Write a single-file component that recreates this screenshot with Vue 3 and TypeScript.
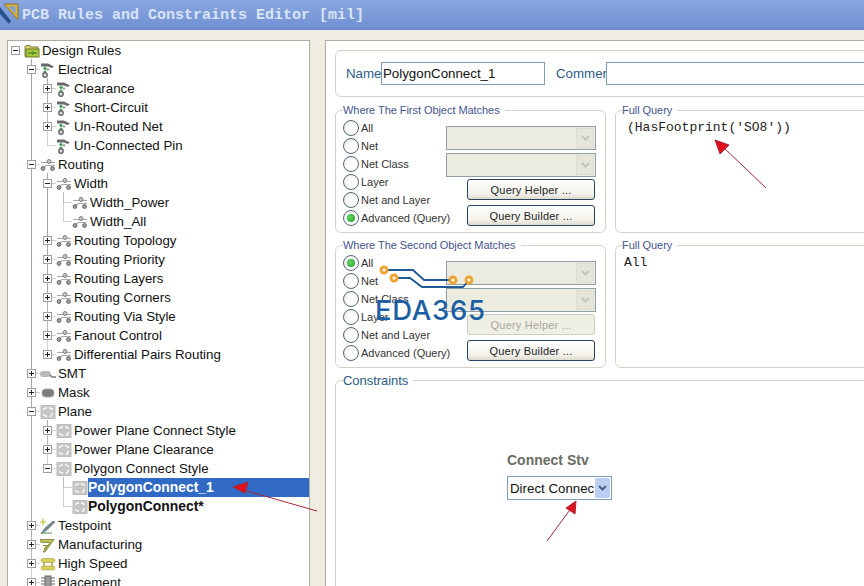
<script setup lang="ts">
type Icon = 'folder' | 'wire' | 'route' | 'smt' | 'mask' | 'plane' | 'test' | 'mfg' | 'speed' | 'place'
interface Row { label: string; level: number; icon: Icon; exp?: '+' | '-'; bold?: boolean; selected?: boolean }

const rows: Row[] = [
  { label: 'Design Rules', level: 0, icon: 'folder', exp: '-' },
  { label: 'Electrical', level: 1, icon: 'wire', exp: '-' },
  { label: 'Clearance', level: 2, icon: 'wire', exp: '+' },
  { label: 'Short-Circuit', level: 2, icon: 'wire', exp: '+' },
  { label: 'Un-Routed Net', level: 2, icon: 'wire', exp: '+' },
  { label: 'Un-Connected Pin', level: 2, icon: 'wire' },
  { label: 'Routing', level: 1, icon: 'route', exp: '-' },
  { label: 'Width', level: 2, icon: 'route', exp: '-' },
  { label: 'Width_Power', level: 3, icon: 'route' },
  { label: 'Width_All', level: 3, icon: 'route' },
  { label: 'Routing Topology', level: 2, icon: 'route', exp: '+' },
  { label: 'Routing Priority', level: 2, icon: 'route', exp: '+' },
  { label: 'Routing Layers', level: 2, icon: 'route', exp: '+' },
  { label: 'Routing Corners', level: 2, icon: 'route', exp: '+' },
  { label: 'Routing Via Style', level: 2, icon: 'route', exp: '+' },
  { label: 'Fanout Control', level: 2, icon: 'route', exp: '+' },
  { label: 'Differential Pairs Routing', level: 2, icon: 'route', exp: '+' },
  { label: 'SMT', level: 1, icon: 'smt', exp: '+' },
  { label: 'Mask', level: 1, icon: 'mask', exp: '+' },
  { label: 'Plane', level: 1, icon: 'plane', exp: '-' },
  { label: 'Power Plane Connect Style', level: 2, icon: 'plane', exp: '+' },
  { label: 'Power Plane Clearance', level: 2, icon: 'plane', exp: '+' },
  { label: 'Polygon Connect Style', level: 2, icon: 'plane', exp: '-' },
  { label: 'PolygonConnect_1', level: 3, icon: 'plane', bold: true, selected: true },
  { label: 'PolygonConnect*', level: 3, icon: 'plane', bold: true },
  { label: 'Testpoint', level: 1, icon: 'test', exp: '+' },
  { label: 'Manufacturing', level: 1, icon: 'mfg', exp: '+' },
  { label: 'High Speed', level: 1, icon: 'speed', exp: '+' },
  { label: 'Placement', level: 1, icon: 'place', exp: '+' },
]

const rowH = 19
const rowY = (i: number) => i * rowH + 9.5
const guides: string[] = []
rows.forEach((r, i) => {
  if (r.level === 0) return
  let p = i - 1
  while (rows[p].level !== r.level - 1) p--
  const x = 7.5 + 16 * r.level
  guides.push(`M${x} ${rowY(p)}V${rowY(i)}H${x + 9}`)
})
const guidePath = guides.join('')

const radios = ['All', 'Net', 'Net Class', 'Layer', 'Net and Layer', 'Advanced (Query)']
const groups = [
  { title: 'Where The First Object Matches', checked: 5, helperOff: false, query: "(HasFootprint('SO8'))" },
  { title: 'Where The Second Object Matches', checked: 0, helperOff: true, query: 'All' },
]
</script>

<template>
  <div class="window">
    <header class="titlebar">
      <svg class="title-icon" width="20" height="24" viewBox="0 0 20 24">
        <path d="M4 2H18V18Z" fill="#d8b23c" stroke="#8a7428" />
        <path d="M8.5 4.5H15.5V12Z" fill="#7f9fd8" />
        <path d="M0 5L11 19L9 22L0 12Z" fill="#27508f" />
      </svg>
      <span class="title-text">PCB Rules and Constraints Editor [mil]</span>
    </header>

    <main class="body">
      <aside class="tree">
        <svg class="guides" width="300" height="560"><path :d="guidePath" fill="none" stroke="#a4a4a4" stroke-dasharray="1 1" /></svg>
        <div v-for="r in rows" :key="r.label" class="row" :style="{ paddingLeft: 3 + 16 * r.level + 'px' }">
          <span class="exp" :class="{ blank: !r.exp, plus: r.exp === '+' }"></span>
          <svg class="icon" width="16" height="16" viewBox="0 0 16 16">
            <template v-if="r.icon === 'folder'">
              <path d="M1 4V3.5L2 2.5H6L7 4H14V13.5H1Z" fill="#d8cf74" stroke="#7f7a3a" />
              <rect x="2" y="6" width="13" height="8" fill="#a9c93c" stroke="#6c7a28" />
              <path d="M4 10H8M8 8.5L10 10L8 11.5M13 10H10" stroke="#2c6a20" fill="none" />
            </template>
            <template v-else-if="r.icon === 'wire'">
              <path d="M1 1.5H8L14 4.5L11.5 6L8 4.5H1Z" fill="#6a6a6a" />
              <path d="M5 4.5L7 6.5L5 8.5L3 6.5Z" fill="#3f9a55" />
              <path d="M8 6L9.5 7.5L8 9L6.5 7.5Z" fill="#8aa08a" />
              <path d="M5 8.5L7 10L5 11L3 10Z" fill="#3f9a55" />
              <circle cx="5" cy="13" r="2.2" fill="#ddd" stroke="#666" stroke-width="1.4" />
            </template>
            <template v-else-if="r.icon === 'route'">
              <path d="M1 5.5H15M1 10.5H4L6 8.5H15" fill="none" stroke="#a8a8a8" stroke-width="1.1" />
              <circle cx="9" cy="4.5" r="2" fill="#c4c4c4" stroke="#808080" />
              <circle cx="3" cy="11.5" r="1.9" fill="#a0a0a0" stroke="#666" />
              <circle cx="12.5" cy="11.5" r="1.9" fill="#a0a0a0" stroke="#666" />
            </template>
            <template v-else-if="r.icon === 'smt'">
              <rect x="0" y="5" width="11" height="6" rx="3" fill="#b9b9b9" />
              <path d="M10 9L12 11H16" fill="none" stroke="#777" stroke-width="1.5" />
            </template>
            <rect v-else-if="r.icon === 'mask'" x="2" y="4" width="12" height="8" rx="3.5" fill="#7c7c7c" stroke="#aaa" />
            <template v-else-if="r.icon === 'plane'">
              <rect x="1" y="1.5" width="14" height="13" fill="#c6c6c6" stroke="#bdbdbd" />
              <path d="M4 6V4H7M9 4H12V6M12 9V12H9M7 12H4V9" fill="none" stroke="#fff" stroke-width="1.4" stroke-dasharray="2 1" />
            </template>
            <template v-else-if="r.icon === 'test'">
              <path d="M1 16L5 10L13 3L15 4L7 12Z" fill="#7b8a90" stroke="#4a6a78" stroke-width=".6" />
              <path d="M1 15H12" stroke="#5b8b4a" />
              <path d="M3 1V7M0 4H6" stroke="#c4c030" stroke-width="1.2" />
            </template>
            <template v-else-if="r.icon === 'mfg'">
              <path d="M0 2.5H14L5 15H3L10 5.5H1Z" fill="#bfc35a" stroke="#7a7f38" stroke-width=".8" />
              <path d="M3 8.5H7.5L4 12.5" fill="none" stroke="#8b8f3e" stroke-width="1.2" />
            </template>
            <template v-else-if="r.icon === 'speed'">
              <rect x="1" y="2.5" width="14" height="4" rx="2" fill="#d8ce5c" stroke="#a5a040" stroke-width=".6" />
              <rect x="1" y="10" width="14" height="4" rx="2" fill="#d8ce5c" stroke="#a5a040" stroke-width=".6" />
              <path d="M4 6V10M12 6V10" stroke="#a5a040" stroke-width="1.4" />
            </template>
            <template v-else>
              <rect x="5" y="1" width="6" height="14" fill="#9a9a9a" stroke="#666" />
              <path d="M1 3H5M1 6H5M1 9H5M1 12H5M11 3H15M11 6H15M11 9H15M11 12H15" stroke="#666" />
            </template>
          </svg>
          <span class="label" :class="{ bold: r.bold, selected: r.selected }">{{ r.label }}</span>
        </div>
      </aside>

      <section class="editor">
        <div class="name-box">
          <label class="name-label name">Name</label>
          <input class="text-input name-input" value="PolygonConnect_1" readonly />
          <label class="name-label comment">Commer</label>
          <input class="text-input comment-input" readonly />
        </div>

        <div v-for="g in groups" :key="g.title" class="match-row">
          <fieldset class="group match">
            <legend>{{ g.title }}</legend>
            <div class="match-body">
              <div class="radios">
                <div v-for="(t, i) in radios" :key="t" class="radio-row">
                  <span class="radio" :class="{ on: i === g.checked }"></span>
                  <span>{{ t }}</span>
                </div>
              </div>
              <div class="controls">
                <div class="combo off"><span class="combo-btn"><svg width="11" height="8" viewBox="0 0 11 8"><path d="M2 2L5.5 5.5L9 2" fill="none" stroke="#c4c3b8" stroke-width="2" /></svg></span></div>
                <div class="combo off second"><span class="combo-btn"><svg width="11" height="8" viewBox="0 0 11 8"><path d="M2 2L5.5 5.5L9 2" fill="none" stroke="#c4c3b8" stroke-width="2" /></svg></span></div>
                <button class="btn first" :class="{ disabled: g.helperOff }">Query Helper ...</button>
                <button class="btn last">Query Builder ...</button>
              </div>
            </div>
          </fieldset>
          <fieldset class="group query">
            <legend>Full Query</legend>
            <div class="query-text" :class="{ all: g.query === 'All' }">{{ g.query }}</div>
          </fieldset>
        </div>

        <fieldset class="group constraints">
          <legend>Constraints</legend>
          <div class="connect">
            <div class="connect-title">Connect Stv</div>
            <div class="connect-combo">
              <span>Direct Connec</span>
              <span class="connect-btn"><svg width="11" height="8" viewBox="0 0 11 8"><path d="M2 2L5.5 5.5L9 2" fill="none" stroke="#4d6185" stroke-width="2" /></svg></span>
            </div>
          </div>
        </fieldset>
      </section>
    </main>

    <div class="watermark">
      <svg width="112" height="32" viewBox="0 0 112 32">
        <path d="M9 5H38L49 15H78M19 13H35L47 22H88L94 15" fill="none" stroke="#1d5a96" stroke-width="1.8" />
        <g fill="#fff" stroke="#efa436" stroke-width="3">
          <circle cx="9" cy="5" r="3" /><circle cx="19" cy="13" r="3" /><circle cx="78" cy="15" r="3" /><circle cx="94" cy="15" r="3" />
        </g>
      </svg>
      <span class="wm-text">EDA365</span>
    </div>

    <svg class="arrows" width="864" height="586">
      <g stroke="#a8283a" fill="#e0101c">
        <path d="M317 511L240 489" fill="none" />
        <path d="M233 487L248 482L245 493Z" />
        <path d="M766 188L722 146" fill="none" />
        <path d="M715 140L729 145L720 154Z" />
        <path d="M547 541L572 507" fill="none" />
        <path d="M576 501L575 514L566 508Z" />
      </g>
    </svg>
  </div>
</template>

<style scoped>
.window {
  position: relative;
  width: 864px;
  height: 586px;
  overflow: hidden;
  background: #efece1;
  font-family: "Liberation Sans", Arial, sans-serif;
  display: flex;
  flex-direction: column;
}
.titlebar {
  height: 30px;
  flex: none;
  display: flex;
  align-items: center;
  background: linear-gradient(#8aa6df, #7293d4 85%, #6c8ccb);
}
.title-icon { flex: none; margin: 0 2px 2px 0; }
.title-text {
  font-family: "Liberation Mono", monospace;
  font-size: 15px;
  font-weight: bold;
  color: #d9e4f6;
  white-space: nowrap;
}
.body {
  flex: 1;
  min-height: 0;
  display: flex;
  padding: 10px 0 0 7px;
  gap: 15px;
}
.tree {
  position: relative;
  width: 303px;
  flex: none;
  box-sizing: border-box;
  background: #fff;
  border: 1px solid #aeac9f;
  border-bottom: 0;
  overflow: hidden;
}
.guides { position: absolute; left: 0; top: 0; }
.row {
  position: relative;
  height: 19px;
  display: flex;
  align-items: center;
  font-size: 13.3px;
  color: #111;
  white-space: nowrap;
}
.exp {
  position: relative;
  width: 9px;
  height: 9px;
  flex: none;
  box-sizing: border-box;
  border: 1px solid #9aa0a0;
  background: #fff;
  margin-right: 4px;
}
.exp::before {
  content: "";
  position: absolute;
  left: 1px;
  top: 3px;
  width: 5px;
  height: 1px;
  background: #222;
}
.exp.plus::after {
  content: "";
  position: absolute;
  left: 3px;
  top: 1px;
  width: 1px;
  height: 5px;
  background: #222;
}
.exp.blank { visibility: hidden; }
.icon { flex: none; background: #fff; }
.label {
  flex: 1;
  height: 19px;
  line-height: 19px;
  padding-left: 2px;
}
.label.bold { font-weight: bold; font-size: 13.9px; padding-left: 0; }
.label.selected { background: #316ac5; color: #fff; }
.editor {
  flex: 1;
  min-width: 0;
  background: #fff;
  border: 1px solid #aeac9f;
  border-width: 1px 0 0 1px;
  padding: 9px 0 0 9px;
  overflow: hidden;
}
.name-box {
  box-sizing: border-box;
  width: 700px;
  height: 47px;
  border: 1px solid #d3d2c6;
  border-radius: 6px;
  display: flex;
  align-items: center;
  padding-left: 10px;
}
.name-label {
  font-size: 13.3px;
  color: #2d5c86;
  flex: none;
  overflow: hidden;
}
.name { width: 35px; }
.comment { width: 50px; margin-left: 11px; }
.text-input {
  box-sizing: border-box;
  height: 23px;
  border: 1px solid #7f9db9;
  padding: 0 2px 0 1px;
  font: 13.3px "Liberation Sans", Arial, sans-serif;
  color: #111;
  outline: none;
  background: #fff;
  flex: none;
}
.name-input { width: 164px; }
.comment-input { width: 300px; }
.match-row {
  display: flex;
  gap: 9px;
  width: 700px;
  margin-top: 6px;
}
.match-row + .match-row { margin-top: 5px; }
.group {
  margin: 0;
  box-sizing: border-box;
  border: 1px solid #d3d2c6;
  border-radius: 6px;
  min-width: 0;
}
.group legend {
  color: #44548f;
  font-size: 11px;
  letter-spacing: -.05px;
  line-height: 14px;
  padding: 0 5px 0 0;
}
.match {
  width: 271px;
  height: 130px;
  flex: none;
  padding: 2px 7px 0;
}
.query {
  width: 350px;
  height: 130px;
  flex: none;
  padding: 2px 0 0 6px;
}
.match-body { display: flex; }
.radios { width: 103px; flex: none; }
.radio-row {
  display: flex;
  align-items: center;
  gap: 2px;
  height: 18px;
  font-size: 11px;
  color: #333;
  white-space: nowrap;
}
.radio {
  position: relative;
  width: 16px;
  height: 16px;
  flex: none;
  box-sizing: border-box;
  border: 1px solid #556877;
  border-radius: 50%;
  background: radial-gradient(circle at 60% 60%, #fff 30%, #e6e6de);
}
.radio.on::after {
  content: "";
  position: absolute;
  left: 3px;
  top: 3px;
  width: 8px;
  height: 8px;
  border-radius: 50%;
  background: radial-gradient(circle at 40% 40%, #63d95d, #1c9a2a);
}
.controls {
  width: 150px;
  flex: none;
  margin-top: 7px;
  display: flex;
  flex-direction: column;
  align-items: flex-end;
}
.combo {
  box-sizing: border-box;
  width: 150px;
  height: 24px;
  border: 1px solid #8f9fa8;
  background: #ecebe0;
  display: flex;
  justify-content: flex-end;
  padding: 1px;
}
.combo.second { margin-top: 3px; }
.combo-btn {
  width: 16px;
  display: flex;
  align-items: center;
  justify-content: center;
  background: #e6e5da;
  border: 1px solid #dddcd0;
}
.btn {
  box-sizing: border-box;
  width: 128px;
  height: 21px;
  padding: 0;
  margin-right: 1px;
  border: 1px solid #27455f;
  border-radius: 3px;
  background: linear-gradient(#fff, #f2f1ea 75%, #dcdace);
  font: 11px "Liberation Sans", Arial, sans-serif;
  letter-spacing: .2px;
  color: #222;
}
.btn.first { margin-top: 2px; }
.btn.last { margin-top: 5px; }
.btn.disabled {
  border-color: #cfceC2;
  background: #f0efe6;
  color: #a8a79c;
}
.query-text {
  font-family: "Liberation Mono", monospace;
  font-size: 13px;
  line-height: 16px;
  color: #222;
  padding: 1px 0 0 5px;
}
.query-text.all { padding-left: 2px; }
.constraints {
  width: 700px;
  height: 260px;
  margin-top: 5px;
  padding: 65px 0 0 7px;
}
.constraints legend {
  font-size: 13px;
  line-height: 15px;
  color: #2d5c86;
}
.connect { margin-left: 164px; }
.connect-title {
  font-size: 14px;
  font-weight: bold;
  color: #6c6c62;
  line-height: 15px;
}
.connect-combo {
  box-sizing: border-box;
  width: 105px;
  height: 24px;
  margin-top: 8px;
  border: 1px solid #7f9db9;
  display: flex;
  align-items: center;
  justify-content: space-between;
  padding: 1px 1px 1px 2px;
  font-size: 13.3px;
  color: #111;
  white-space: nowrap;
}
.connect-btn {
  width: 15px;
  height: 20px;
  display: flex;
  align-items: center;
  justify-content: center;
  background: #bcd0f4;
  border-radius: 2px;
}
.watermark {
  position: absolute;
  left: 375px;
  top: 265px;
  width: 112px;
  pointer-events: none;
}
.watermark svg { display: block; }
.wm-text {
  display: block;
  margin-top: -1px;
  font-family: Inter, sans-serif;
  font-size: 27.5px;
  line-height: 28px;
  font-weight: 500;
  letter-spacing: .7px;
  color: #1b5ea4;
}
.arrows {
  position: absolute;
  left: 0;
  top: 0;
  pointer-events: none;
}
</style>
